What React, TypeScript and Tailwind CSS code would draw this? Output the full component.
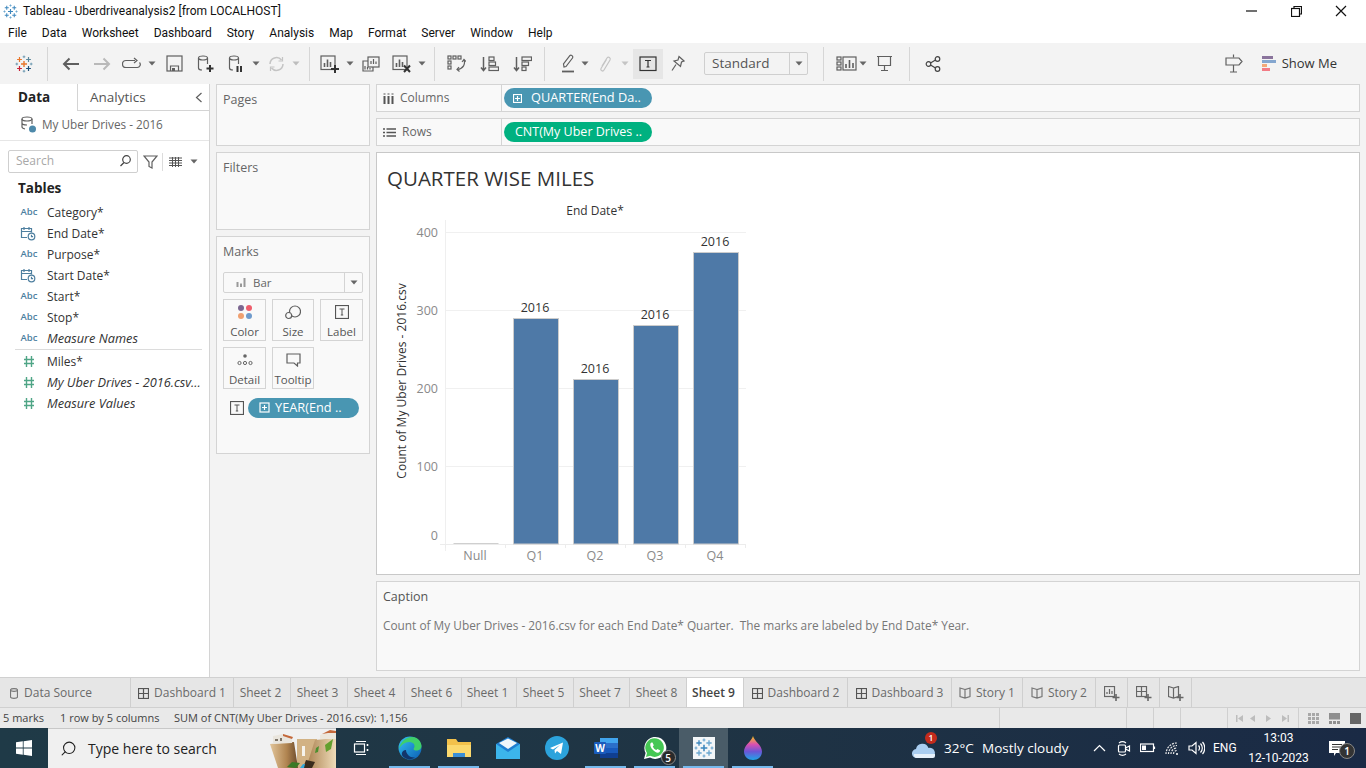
import { Search } from "lucide-react";

const stroke = "#5f5f5f";

function Ic({ w = 20, h = 20, c = stroke, children }: { w?: number; h?: number; c?: string; children: React.ReactNode }) {
  return (
    <svg width={w} height={h} viewBox={`0 0 ${w} ${h}`} fill="none" stroke={c} strokeWidth="1.2">
      {children}
    </svg>
  );
}

function Cross({ x, y, r, c, sw = 1 }: { x: number; y: number; r: number; c: string; sw?: number }) {
  return <path d={`M${x - r} ${y}H${x + r}M${x} ${y - r}V${y + r}`} stroke={c} strokeWidth={sw} fill="none" />;
}

// tableau logo, a = centre and top left, then clockwise
function TableauMark({ size = 18, a, b, d, e, s }: { size?: number; a: string; b: string; d: string; e: string; s: string }) {
  return (
    <svg width={size} height={size} viewBox="0 0 18 18">
      <Cross x={9} y={9} r={3} c={a} sw={1.4} />
      <Cross x={9} y={1.8} r={1.3} c={s} />
      <Cross x={9} y={16.2} r={1.3} c={s} />
      <Cross x={1.8} y={9} r={1.3} c={s} />
      <Cross x={16.2} y={9} r={1.3} c={s} />
      <Cross x={4.5} y={4.5} r={2.4} c={a} sw={1.2} />
      <Cross x={13.5} y={4.5} r={2.4} c={b} sw={1.2} />
      <Cross x={4.5} y={13.5} r={2.4} c={d} sw={1.2} />
      <Cross x={13.5} y={13.5} r={2.4} c={e} sw={1.2} />
    </svg>
  );
}

function Caret({ c = "#666" }: { c?: string }) {
  return (
    <svg width="8" height="5" viewBox="0 0 8 5">
      <path d="M0.5 0.5H7.5L4 4.5Z" fill={c} />
    </svg>
  );
}

function Slot({ w, children }: { w: string; children?: React.ReactNode }) {
  return <div className={`flex h-full shrink-0 items-center justify-center ${w}`}>{children}</div>;
}

function Sep() {
  return <div className="h-[34px] w-px shrink-0 bg-[#d6d6d6]" />;
}

function Toolbar() {
  return (
    <div className="flex h-[41px] items-center bg-[#f3f3f3]">
      <Slot w="w-[47px]">
        <TableauMark a="#e8762b" b="#5b879b" d="#c72037" e="#1f4f78" s="#6f9bb3" />
      </Slot>
      <Sep />
      <Slot w="w-[6px]" />
      <Slot w="w-[32px]">
        <Ic w={17} h={14} c="#5f5f5f">
          <path d="M17 7H2M7.5 1.5L2 7l5.5 5.5" strokeWidth="2" />
        </Ic>
      </Slot>
      <Slot w="w-[32px]">
        <Ic w={17} h={14} c="#b9b9b9">
          <path d="M0 7h15M9.500 1.500L15 7l-5.500 5.500" strokeWidth="2" />
        </Ic>
      </Slot>
      <Slot w="w-[26px]">
        <Ic w={19} h={14}>
          <path d="M13 3.500H4a3 3 0 0 0 0 7h11a3 3 0 0 0 2.500-5" />
          <path d="M12 1l3 2.500L12 6" />
        </Ic>
      </Slot>
      <Slot w="w-[16px]"><Caret /></Slot>
      <Slot w="w-[28px]">
        <Ic w={17} h={17}>
          <rect x="1" y="1" width="15" height="15" />
          <path d="M4.500 16v-5h8v5" />
          <rect x="6" y="13" width="3" height="3" fill={stroke} stroke="none" />
        </Ic>
      </Slot>
      <Slot w="w-[36px]">
        <Ic w={18} h={18}>
          <ellipse cx="6" cy="3" rx="4.500" ry="2" />
          <path d="M1.500 3v10c0 1 1 2 3.500 2M10.500 3v6" />
          <path d="M13 10v7M9.500 13.500h7" stroke="#333" strokeWidth="2" />
        </Ic>
      </Slot>
      <Slot w="w-[24px]">
        <Ic w={16} h={18}>
          <ellipse cx="6" cy="3" rx="4.500" ry="2" />
          <path d="M1.500 3v10c0 1 1 2 3.500 2M10.500 3v6" />
          <path d="M9.500 11v6M13 11v6" stroke="#333" strokeWidth="2" />
        </Ic>
      </Slot>
      <Slot w="w-[16px]"><Caret /></Slot>
      <Slot w="w-[24px]">
        <Ic w={17} h={16} c="#c4c4c4">
          <path d="M2 8a6.500 6.500 0 0 1 11.500-4M15 8a6.500 6.500 0 0 1-11.500 4" strokeWidth="1.500" />
          <path d="M14.500 1v4h-4M2.500 15v-4h4" />
        </Ic>
      </Slot>
      <Slot w="w-[16px]"><Caret c="#bdbdbd" /></Slot>
      <Slot w="w-[5px]" />
      <Sep />
      <Slot w="w-[5px]" />
      <Slot w="w-[30px]">
        <Ic w={20} h={18}>
          <rect x="1" y="1" width="14" height="13.500" />
          <path d="M4.500 12V8M7.500 12V4.500M10.500 12V7" strokeWidth="1.600" />
          <path d="M15 10v8M11 14h8" stroke="#333" strokeWidth="2" />
        </Ic>
      </Slot>
      <Slot w="w-[10px]"><Caret /></Slot>
      <Slot w="w-[31px]">
        <Ic w={18} h={16}>
          <rect x="6" y="1" width="11" height="10" />
          <path d="M9 8V5M11.500 8V3M14 8V5.500" />
          <path d="M6 5H1v10h10v-4" />
          <path d="M3 13.500V10M5.500 13.500V11M8 13.500V12" />
        </Ic>
      </Slot>
      <Slot w="w-[31px]">
        <Ic w={20} h={18}>
          <rect x="1" y="1" width="14" height="13.500" />
          <path d="M4.500 12V8M7.500 12V4.500M10.500 12V7" strokeWidth="1.600" />
          <path d="M12 10.500l6 6.500M18 10.500l-6 6.500" stroke="#333" strokeWidth="2" />
        </Ic>
      </Slot>
      <Slot w="w-[10px]"><Caret /></Slot>
      <Slot w="w-[7px]" />
      <Sep />
      <Slot w="w-[5px]" />
      <Slot w="w-[33px]">
        <Ic w={19} h={17}>
          <rect x="1" y="1" width="3" height="3" />
          <rect x="6" y="1" width="3" height="3" />
          <rect x="11" y="1" width="3" height="3" />
          <rect x="1" y="6" width="3" height="3" />
          <rect x="1" y="11" width="3" height="3" />
          <path d="M17 5c1.500 4-.5 8.500-6.500 9.500M12 12l-2 2.500 2.500 2M15 7l2-2.500 2 2" />
        </Ic>
      </Slot>
      <Slot w="w-[33px]">
        <Ic w={19} h={16}>
          <path d="M3.500 1v13M1 11.500L3.500 14.500 6 11.500" strokeWidth="1.500" />
          <rect x="9" y="1" width="5" height="3.500" />
          <rect x="9" y="6" width="6.500" height="3.500" />
          <rect x="9" y="11" width="9.500" height="3.500" />
        </Ic>
      </Slot>
      <Slot w="w-[32px]">
        <Ic w={19} h={16}>
          <path d="M3.500 1v13M1 11.500L3.500 14.500 6 11.500" strokeWidth="1.500" />
          <rect x="9" y="1" width="9.500" height="3.500" />
          <rect x="9" y="6" width="6.500" height="3.500" />
          <rect x="9" y="11" width="4" height="3.500" />
        </Ic>
      </Slot>
      <Slot w="w-[6px]" />
      <Sep />
      <Slot w="w-[14px]" />
      <Slot w="w-[18px]">
        <Ic w={14} h={20}>
          <path d="M3 13l-.500-3L9 1.500c1-1 3.500 .500 2.500 2.500L5 12.500z" />
          <path d="M1 17.500h12" strokeWidth="1.800" />
        </Ic>
      </Slot>
      <Slot w="w-[16px]"><Caret /></Slot>
      <Slot w="w-[24px]">
        <Ic w={14} h={18} c="#c4c4c4">
          <path d="M4 11l5-8c1.500-2 4 0 3 2l-6 10c-1 2-4 .500-3-1.500l5.500-9" />
        </Ic>
      </Slot>
      <Slot w="w-[16px]"><Caret c="#c4c4c4" /></Slot>
      <Slot w="w-[30px]">
        <div className="flex h-[30px] w-[30px] items-center justify-center bg-[#e6e6e6]">
          <Ic w={18} h={16} c="#333">
            <rect x="1" y="1" width="16" height="13.500" />
            <path d="M6 4.500h6M9 4.500v6.500M7.500 11h3" />
          </Ic>
        </div>
      </Slot>
      <Slot w="w-[29px]">
        <Ic w={14} h={17}>
          <path d="M8 1.500l5 4.500-2.500 1-1 4.500L3 6l4-1z" />
          <path d="M5 9.500L1 15.500" />
        </Ic>
      </Slot>
      <Slot w="w-[12px]" />
      <div className="flex h-[23px] w-[104px] shrink-0 items-center rounded-[2px] border border-[#cfcfcf] text-[13.500px] text-[#555]">
        <span className="flex-1 pl-[7px]">Standard</span>
        <span className="flex h-full w-[18px] items-center justify-center border-l border-[#cfcfcf]"><Caret /></span>
      </div>
      <Slot w="w-[15px]" />
      <Sep />
      <Slot w="w-[12px]" />
      <Slot w="w-[21px]">
        <Ic w={21} h={16}>
          <rect x="1" y="1" width="4" height="3" />
          <rect x="1" y="6" width="4" height="3" />
          <rect x="1" y="11" width="4" height="3" />
          <rect x="7" y="1" width="13" height="13" />
          <path d="M10 12V8M13.500 12V4M17 12V7" strokeWidth="1.600" />
        </Ic>
      </Slot>
      <Slot w="w-[12px]"><Caret /></Slot>
      <Slot w="w-[31px]">
        <Ic w={17} h={17}>
          <path d="M1 1.500h15M2.500 1.500v9h12v-9M8.500 10.500V15M5 15.500h7" />
        </Ic>
      </Slot>
      <Slot w="w-[9px]" />
      <Sep />
      <Slot w="w-[13px]" />
      <Slot w="w-[20px]">
        <Ic w={16} h={16} c="#444">
          <circle cx="3.500" cy="8" r="2.300" />
          <circle cx="12.500" cy="3" r="2.300" />
          <circle cx="12.500" cy="13" r="2.300" />
          <path d="M5.500 7l5-3M5.500 9l5 3" />
        </Ic>
      </Slot>
      <div className="flex-1" />
      <Slot w="w-[18px]">
        <Ic w={18} h={19}>
          <path d="M8.500 0.500v3M8.500 11v7M5 18h7" />
          <path d="M1 4h13l3 3.500-3 3.500H1z" />
        </Ic>
      </Slot>
      <Slot w="w-[19px]" />
      <div className="flex h-[16px] w-[14px] shrink-0 flex-col gap-px">
        <div className="h-[3px] w-[11px] bg-[#8a749c]" />
        <div className="h-[3px] w-[14px] bg-[#84a6cf]" />
        <div className="h-[3px] w-[5px] bg-[#f2a878]" />
        <div className="h-[3px] w-[8px] bg-[#f27b85]" />
      </div>
      <span className="ml-[6px] mr-[29px] text-[13px] text-[#333]">Show Me</span>
    </div>
  );
}

function Abc() {
  return <span className="w-[18px] text-center text-[9.500px] font-semibold text-[#4e7f9f]">Abc</span>;
}

function Cal() {
  return (
    <Ic w={17} h={15} c="#4e7f9f">
      <path d="M7 11.500H1.500V2.500h10v4M1.500 5.500h10M4 1v3M9 1v3" />
      <circle cx="11.500" cy="10.500" r="3.300" />
      <path d="M11.500 8.700v2h1.600" />
    </Ic>
  );
}

function Hash() {
  return (
    <Ic w={18} h={13} c="#4fa586">
      <path d="M6.500 1v11M11.500 1v11M4 4.500h10M4 8.500h10" strokeWidth="1.400" />
    </Ic>
  );
}

function Field({ icon, label, italic }: { icon: React.ReactNode; label: string; italic?: boolean }) {
  return (
    <div className="flex h-[21px] items-center pl-[20px] pr-[3px] text-[#333]">
      <span className="flex w-[27px] shrink-0 items-center">{icon}</span>
      <span className={`truncate ${italic ? "text-[12.750px] italic" : "text-[12px]"}`}>{label}</span>
    </div>
  );
}

function DataPane() {
  return (
    <div className="flex w-[210px] shrink-0 flex-col border-r border-[#d4d4d4] bg-white">
      <div className="flex h-[27px] text-[13.500px]">
        <div className="flex w-[77px] items-center pl-[18px] font-bold text-[#222]">Data</div>
        <div className="flex flex-1 items-center justify-between border-b border-l border-[#d4d4d4] pl-[12px] pr-[6px] text-[#555]">
          Analytics
          <Ic w={8} h={11}><path d="M6.500 1L1.500 5.500 6.500 10" /></Ic>
        </div>
      </div>
      <div className="flex h-[30px] items-center gap-[5px] border-b border-[#e6e6e6] pb-[2px] pl-[20px] text-[11.750px] text-[#666]">
        <Ic w={17} h={17}>
          <ellipse cx="7" cy="3" rx="5" ry="2" />
          <path d="M2 3v8c0 1 1 1.500 3 2M12 3v5M2 7c0 1 2 2 5 2" />
          <circle cx="12.500" cy="13" r="3.500" fill="#4d89aa" stroke="none" />
        </Ic>
        My Uber Drives - 2016
      </div>
      <div className="mt-[9px] flex h-[23px] items-center pl-[8px]">
        <div className="flex h-[23px] w-[130px] items-center justify-between rounded-[2px] border border-[#cfcfcf] pb-[2px] pl-[7px] pr-[5px] text-[12px] text-[#a8a8a8]">
          Search
          <Ic w={13} h={13} c="#444"><circle cx="7.500" cy="5.500" r="3.800" /><path d="M5 8.500L1.500 12" /></Ic>
        </div>
        <span className="ml-[4px] flex w-[16px] justify-center">
          <Ic w={15} h={14}><path d="M1 1h13L9 7v6l-3-1.500V7z" /></Ic>
        </span>
        <span className="ml-[4px] h-[18px] w-px bg-[#dcdcdc]" />
        <span className="ml-[6px]">
          <Ic w={13} h={10} c="#555"><path d="M0 1h13M0 3.500h13M0 6h13M0 8.500h13M3.500 0v10M6.500 0v10M9.500 0v10" strokeWidth="1" /></Ic>
        </span>
        <span className="ml-[8px]"><Caret /></span>
      </div>
      <div className="mt-[4px] flex h-[22px] items-center pl-[18px] text-[13.500px] font-bold text-[#222]">Tables</div>
      <div className="mt-[3px]">
        <Field icon={<Abc />} label="Category*" />
        <Field icon={<Cal />} label="End Date*" />
        <Field icon={<Abc />} label="Purpose*" />
        <Field icon={<Cal />} label="Start Date*" />
        <Field icon={<Abc />} label="Start*" />
        <Field icon={<Abc />} label="Stop*" />
        <Field icon={<Abc />} label="Measure Names" italic />
      </div>
      <div className="ml-[15px] mr-[7px] h-px bg-[#dcdcdc]" />
      <div className="mt-px">
        <Field icon={<Hash />} label="Miles*" />
        <Field icon={<Hash />} label="My Uber Drives - 2016.csv..." italic />
        <Field icon={<Hash />} label="Measure Values" italic />
      </div>
    </div>
  );
}

function MarkCard({ icon, label }: { icon: React.ReactNode; label: string }) {
  return (
    <div className="flex h-[42px] w-full flex-col items-center justify-end border border-[#d4d4d4] text-[11.500px] text-[#555]">
      <div className="flex flex-1 items-center justify-center pt-[2px]">{icon}</div>
      {label}
    </div>
  );
}

function TBox({ c = "#555" }: { c?: string }) {
  return (
    <Ic w={14} h={14} c={c}>
      <rect x="0.500" y="0.500" width="13" height="13" />
      <path d="M4.500 4h5M7 4v6M5.800 10h2.400" strokeWidth="1" />
    </Ic>
  );
}

function ShelfCards() {
  return (
    <div className="flex w-[154px] shrink-0 flex-col gap-[6px]">
      <div className="h-[62px] border border-[#d4d4d4] bg-[#f9f9f9] pl-[6px] pt-[6px] text-[12.500px] text-[#666]">Pages</div>
      <div className="h-[78px] border border-[#d4d4d4] bg-[#f9f9f9] pl-[6px] pt-[6px] text-[12.500px] text-[#666]">Filters</div>
      <div className="h-[218px] border border-[#d4d4d4] bg-[#f9f9f9] pl-[6px] pr-[6px] pt-[6px]">
        <div className="text-[12.500px] text-[#666]">Marks</div>
        <div className="mt-[10px] flex h-[21px] items-center rounded-[2px] border border-[#d4d4d4] text-[11.500px] text-[#666]">
          <span className="ml-[12px]">
            <Ic w={10} h={10} c="#999"><path d="M1.500 10V5M5 10V6.500M8.500 10V1" strokeWidth="2" /></Ic>
          </span>
          <span className="ml-[7px] flex-1">Bar</span>
          <span className="flex h-full w-[18px] items-center justify-center border-l border-[#d4d4d4]"><Caret /></span>
        </div>
        <div className="mt-[6px] grid grid-cols-[43px_42px_43px] gap-x-[6px] gap-y-[6px]">
          <MarkCard
            label="Color"
            icon={
              <svg width="16" height="16" viewBox="0 0 16 16">
                <circle cx="4" cy="4" r="3" fill="#7b6690" />
                <circle cx="12" cy="4" r="3" fill="#ee5d6c" />
                <circle cx="4" cy="12" r="3" fill="#f0a070" />
                <circle cx="12" cy="12" r="3" fill="#6f9bcc" />
              </svg>
            }
          />
          <MarkCard
            label="Size"
            icon={
              <Ic w={16} h={15}>
                <circle cx="10" cy="6.500" r="5.500" />
                <circle cx="3.700" cy="10.500" r="3" fill="#f9f9f9" />
              </Ic>
            }
          />
          <MarkCard label="Label" icon={<TBox />} />
          <MarkCard
            label="Detail"
            icon={
              <svg width="16" height="14" viewBox="0 0 16 14" fill="none" stroke="#666">
                <circle cx="8" cy="3" r="1.800" fill="#666" stroke="none" />
                <circle cx="2.500" cy="10" r="1.600" />
                <circle cx="8" cy="10" r="1.600" />
                <circle cx="13.500" cy="10" r="1.600" />
              </svg>
            }
          />
          <MarkCard
            label="Tooltip"
            icon={
              <Ic w={15} h={14}><path d="M1 1h13v9h-2.500v3L8 10H1z" /></Ic>
            }
          />
        </div>
        <div className="mt-[9px] flex items-center pl-[7px]">
          <TBox />
          <div className="ml-[4px] flex h-[20px] w-[111px] items-center rounded-full bg-[#4996b2] pl-[11px] text-[12.750px] text-white">
            <Ic w={11} h={11} c="white"><rect x="1" y="1" width="9" height="9" /><path d="M3 5.500h5M5.500 3v5" /></Ic>
            <span className="ml-[5px]">YEAR(End ..</span>
          </div>
        </div>
      </div>
    </div>
  );
}

function Shelf({ icon, label, children }: { icon: React.ReactNode; label: string; children: React.ReactNode }) {
  return (
    <div className="flex h-[28px] items-center border border-[#d4d4d4] bg-[#f9f9f9] text-[12px] text-[#666]">
      <div className="flex h-full w-[125px] shrink-0 items-center gap-[6px] border-r border-[#d4d4d4] pl-[6px]">
        {icon}
        {label}
      </div>
      <div className="pl-[2px]">{children}</div>
    </div>
  );
}

function Pill({ color, children }: { color: string; children: React.ReactNode }) {
  return <div className={`flex h-[20px] w-[148px] items-center rounded-full text-[12.500px] text-white ${color}`}>{children}</div>;
}

const bars = [
  { x: 513.5, y: 318.5 },
  { x: 573.5, y: 379.5 },
  { x: 633.5, y: 325.5 },
  { x: 693.5, y: 252.5 },
];

function Chart() {
  return (
    <svg width="400" height="370" viewBox="377 200 400 370" className="block" fontFamily="'Open Sans', sans-serif">
      <text x="595" y="215" textAnchor="middle" fontSize="12" fill="#333">End Date*</text>
      {[232.5, 310.5, 388.5, 466.5].map((y) => (
        <line key={y} x1="446" x2="746" y1={y} y2={y} stroke="#f0f0f0" />
      ))}
      <line x1="445.500" x2="445.500" y1="220" y2="551" stroke="#efefef" />
      <line x1="440" x2="746" y1="544.500" y2="544.500" stroke="#ececec" />
      {[445.5, 505.5, 565.5, 625.5, 685.5, 745.5].map((x) => (
        <line key={x} x1={x} x2={x} y1="544" y2="548" stroke="#ececec" />
      ))}
      <rect x="453.500" y="543" width="45" height="1" fill="#cfcfcf" />
      {bars.map((b) => (
        <rect key={b.x} x={b.x} y={b.y} width="45" height={544 - b.y} fill="#4e79a7" stroke="#cccccc" />
      ))}
      {[
        ["400", 237],
        ["300", 315],
        ["200", 393],
        ["100", 471],
        ["0", 540],
      ].map(([t, y]) => (
        <text key={t} x="438" y={y} textAnchor="end" fontSize="12.500" fill="#8a8a8a">{t}</text>
      ))}
      <text transform="translate(406 381) rotate(-90)" textAnchor="middle" fontSize="12" fill="#333">Count of My Uber Drives - 2016.csv</text>
      {[
        ["Null", 475],
        ["Q1", 535],
        ["Q2", 595],
        ["Q3", 655],
        ["Q4", 715],
      ].map(([t, x]) => (
        <text key={t} x={x} y="560" textAnchor="middle" fontSize="12.500" fill="#8a8a8a">{t}</text>
      ))}
      {[
        [535, 312],
        [595, 373],
        [655, 319],
        [715, 246],
      ].map(([x, y]) => (
        <text key={x} x={x} y={y} textAnchor="middle" fontSize="12.500" fill="#333">2016</text>
      ))}
    </svg>
  );
}

function Tab({ w, label, icon, active }: { w: string; label: string; icon?: React.ReactNode; active?: boolean }) {
  return (
    <div
      className={`flex h-full shrink-0 items-center justify-center gap-[5px] border-r border-[#cfcfcf] text-[12px] ${w} ${icon ? "" : "pr-[3px]"} ${
        active ? "bg-white font-semibold text-[#444]" : "pt-[1px] text-[#6a6a6a]"
      }`}
    >
      {icon}
      {label}
    </div>
  );
}

function DashIcon() {
  return <Ic w={11} h={11} c="#555"><rect x="0.500" y="0.500" width="10" height="10" /><path d="M5.500 0.500v10M0.500 5.500h10" /></Ic>;
}

function StoryIcon() {
  return <Ic w={12} h={12} c="#777"><path d="M6 2.500L1 1v8.500l5 1.500 5-1.500V1zM6 2.500V11" /></Ic>;
}

function TabBar() {
  return (
    <div className="flex h-[31px] border-y border-[#d0d0d0] bg-[#e6e6e6]">
      <div className="flex h-full w-[131px] shrink-0 items-center gap-[6px] border-r border-[#cfcfcf] pl-[10px] pt-[1px] text-[12px] text-[#6a6a6a]">
        <Ic w={8} h={11} c="#777"><path d="M0.500 2v7c0 1.800 7 1.800 7 0V2c0-1.800-7-1.800-7 0zM0.500 2c0 1.800 7 1.800 7 0" /></Ic>
        Data Source
      </div>
      <Tab w="w-[103px]" label="Dashboard 1" icon={<DashIcon />} />
      <Tab w="w-[57px]" label="Sheet 2" />
      <Tab w="w-[57px]" label="Sheet 3" />
      <Tab w="w-[57px]" label="Sheet 4" />
      <Tab w="w-[57px]" label="Sheet 6" />
      <Tab w="w-[55px]" label="Sheet 1" />
      <Tab w="w-[57px]" label="Sheet 5" />
      <Tab w="w-[56px]" label="Sheet 7" />
      <Tab w="w-[57px]" label="Sheet 8" />
      <Tab w="w-[57px]" label="Sheet 9" active />
      <Tab w="w-[104px]" label="Dashboard 2" icon={<DashIcon />} />
      <Tab w="w-[104px]" label="Dashboard 3" icon={<DashIcon />} />
      <Tab w="w-[71px]" label="Story 1" icon={<StoryIcon />} />
      <Tab w="w-[73px]" label="Story 2" icon={<StoryIcon />} />
      <Tab
        w="w-[32px]"
        label=""
        icon={
          <Ic w={16} h={15} c="#666">
            <rect x="0.500" y="0.500" width="10" height="10" />
            <path d="M3 8V6M5.500 8V3M8 8V5" />
            <path d="M12 8v7M8.500 11.500h7" strokeWidth="1.600" />
          </Ic>
        }
      />
      <Tab
        w="w-[32px]"
        label=""
        icon={
          <Ic w={16} h={15} c="#666">
            <rect x="0.500" y="0.500" width="10" height="10" />
            <path d="M5.500 0.500v10M0.500 5.500h10" />
            <path d="M12 8v7M8.500 11.500h7" strokeWidth="1.600" />
          </Ic>
        }
      />
      <Tab
        w="w-[32px]"
        label=""
        icon={
          <Ic w={16} h={15} c="#666">
            <path d="M5.500 2L0.500 0.500v10l5 1.500 5-1.500V0.500zM5.500 2v10" />
            <path d="M12 8v7M8.500 11.500h7" strokeWidth="1.600" />
          </Ic>
        }
      />
    </div>
  );
}

function StatusBar() {
  return (
    <div className="flex h-[20px] items-center bg-[#e9e9e9] text-[11px] text-[#444]">
      <span className="ml-[3px] w-[57px]">5 marks</span>
      <span className="w-[114px]">1 row by 5 columns</span>
      <span className="w-[825px]">SUM of CNT(My Uber Drives - 2016.csv): 1,156</span>
      <span className="h-full w-[127px] border-l border-[#d0d0d0]" />
      <span className="h-full w-[27px] border-l border-[#d0d0d0]" />
      <span className="h-full w-[27px] border-l border-[#d0d0d0]" />
      <span className="h-full w-[47px] border-l border-[#d0d0d0]" />
      <span className="flex h-full w-[71px] items-center gap-[9px] border-l border-[#d0d0d0] pl-[8px]">
        <svg width="56" height="9" viewBox="0 0 56 9" fill="#bdbdbd">
          <path d="M0 1h1.500v7H0zM7 1v7L2 4.500zM19 1v7l-5-3.500zM30 1l5 3.500L30 8zM46 1l5 3.500L46 8zM51.500 1H53v7h-1.500z" />
        </svg>
      </span>
      <span className="flex h-full flex-1 items-center gap-[10px] border-l border-[#d0d0d0] pl-[9px]">
        <svg width="11" height="11" viewBox="0 0 11 11" fill="#a8a8a8">
          <path d="M0 0h3v3H0zM4 0h3v3H4zM8 0h3v3H8zM0 4h3v3H0zM4 4h3v3H4zM8 4h3v3H8zM0 8h3v3H0zM4 8h3v3H4zM8 8h3v3H8z" />
        </svg>
        <svg width="11" height="11" viewBox="0 0 11 11" fill="#8f8f8f">
          <path d="M0 0h11v6.500H0zM0 8h3v3H0zM4 8h3v3H4zM8 8h3v3H8z" />
        </svg>
        <span className="h-[11px] w-[11px] bg-[#666]" />
      </span>
    </div>
  );
}

function TaskSlot({ w = "w-[49px]", line, bg, children }: { w?: string; line?: boolean; bg?: string; children: React.ReactNode }) {
  return (
    <div className={`relative flex h-full shrink-0 items-center justify-center ${w} ${bg ?? ""}`}>
      {children}
      {line && <div className="absolute bottom-0 left-[4px] right-[4px] h-[2px] bg-[#76b9ed]" />}
    </div>
  );
}

function Taskbar() {
  return (
    <div className="flex h-[40px] bg-gradient-to-r from-[#1f3a47] via-[#1f3444] to-[#1a2a45] text-white">
      <div className="flex w-[48px] shrink-0 items-center justify-center">
        <svg width="16" height="16" viewBox="0 0 16 16" fill="white">
          <path d="M0 2.300L6.800 1.300V7.600H0zM7.600 1.200L16 0V7.600H7.600zM0 8.400H6.800V14.700L0 13.700zM7.600 8.400H16V16L7.600 14.800z" />
        </svg>
      </div>
      <div className="relative flex w-[288px] shrink-0 items-center overflow-hidden border-t border-[#c8c8c8] bg-[#f0f0f0] pl-[12px] text-[14px] text-[#222]">
        <Search size={17} strokeWidth={1.500} className="-scale-x-100" color="#222" />
        <span className="ml-[11px]">Type here to search</span>
        <svg className="absolute bottom-0 right-0" width="66" height="38" viewBox="0 0 66 38">
          <defs>
            <linearGradient id="rockL" x1="0" y1="0" x2="1" y2="0">
              <stop offset="0" stopColor="#e2c59a" />
              <stop offset="0.600" stopColor="#b08450" />
              <stop offset="1" stopColor="#6b4a2c" />
            </linearGradient>
            <linearGradient id="rockR" x1="0" y1="0" x2="1" y2="0">
              <stop offset="0" stopColor="#a97f4e" />
              <stop offset="1" stopColor="#efdcb9" />
            </linearGradient>
          </defs>
          <path d="M27 9H47V38H27Z" fill="#d2b284" />
          <path d="M0 14L24 12L28 38H8Z" fill="url(#rockL)" />
          <path d="M45 10L66 8V38H36Z" fill="url(#rockR)" />
          <path d="M3 6L13 4L22 7V13L3 14Z" fill="#e9e5dd" />
          <path d="M5 9h3v2H5zM10 8h2v3h-2z" fill="#7d7468" />
          <path d="M13 4L23 7L22 9L13 6Z" fill="#c4683a" />
          <path d="M50 5L60 1L66 2V9L50 9Z" fill="#ece7dc" />
          <path d="M52 4L60 0L66 1V3L58 3Z" fill="#c4683a" />
          <path d="M55 15L63 9L61 19L56 22Z" fill="#63a02f" />
          <path d="M45 23L46 18L49 16L48 22Z" fill="#4c8f2e" />
          <path d="M17 37L22 32L30 33L26 38Z" fill="#3a7a26" />
          <path d="M33 38L36 30L45 32L42 38Z" fill="#3a2c1c" />
          <path d="M30 38L33 34L35 34L34 38Z" fill="#35a8d8" />
          <path d="M32 16H35V26H32Z" fill="#f6f3ec" />
        </svg>
      </div>
      <TaskSlot w="w-[49px]">
        <Ic w={16} h={16} c="white">
          <path d="M3 1.500h10M3 14.500h10" />
          <rect x="1.500" y="4" width="10" height="8" />
          <path d="M14.500 4v2M14.500 9v2" strokeWidth="1.600" />
        </Ic>
      </TaskSlot>
      <TaskSlot line>
        <svg width="24" height="24" viewBox="0 0 24 24">
          <defs>
            <linearGradient id="edgeA" x1="0" y1="0" x2="1" y2="1">
              <stop offset="0" stopColor="#35c1f1" />
              <stop offset="1" stopColor="#0b5fb4" />
            </linearGradient>
          </defs>
          <circle cx="12" cy="12" r="11.500" fill="url(#edgeA)" />
          <path d="M1 13C2 6 8 1 14 1c6 0 9.500 5 9.500 9 0 3-2.500 4.500-5 4.500-2 0-3-.7-3-1.500 0-1 1-1 1-3C16.500 7 13.500 6 11 6 7 6 3 9 1 13Z" fill="#3fd06a" />
          <path d="M8 14c0 4 4 8 9 7.500-3 2-8 2.500-11.500-.5C3 19 3 14.500 8 14Z" fill="#12356b" />
        </svg>
      </TaskSlot>
      <TaskSlot line>
        <svg width="24" height="20" viewBox="0 0 24 20">
          <path d="M0 1h9l2 3h13v15H0z" fill="#f2c14b" />
          <path d="M0 7h24v12H0z" fill="#fbd96e" />
          <path d="M6 15h12v4H6z" fill="#3a8fd6" />
        </svg>
      </TaskSlot>
      <TaskSlot>
        <svg width="24" height="22" viewBox="0 0 24 22">
          <path d="M0 7L12 0L24 7V22H0Z" fill="#1f7fd1" />
          <path d="M0 7L12 15L24 7V22H0Z" fill="#3cb5ec" />
          <path d="M3 6L12 1.500L21 6L12 12Z" fill="#f1f7fb" />
        </svg>
      </TaskSlot>
      <TaskSlot>
        <svg width="24" height="24" viewBox="0 0 24 24">
          <circle cx="12" cy="12" r="12" fill="#2ca3dc" />
          <path d="M5 12L18 6.500L16 18L12 15L10 17.500L9.500 14L15 9L8 13.500Z" fill="white" />
        </svg>
      </TaskSlot>
      <TaskSlot line>
        <svg width="24" height="22" viewBox="0 0 24 22">
          <rect x="6" y="1" width="18" height="20" rx="1" fill="#2b6fc9" />
          <rect x="6" y="1" width="18" height="5" fill="#41a5ee" />
          <rect x="6" y="11" width="18" height="5" fill="#185abd" />
          <rect x="6" y="16" width="18" height="5" fill="#103f91" />
          <rect x="0" y="5" width="12" height="12" rx="1" fill="#1a5cbd" />
          <text x="6" y="14.500" textAnchor="middle" fontSize="10" fontWeight="700" fill="white">W</text>
        </svg>
      </TaskSlot>
      <TaskSlot line>
        <div className="relative">
          <svg width="24" height="24" viewBox="0 0 24 24">
            <path d="M1 23l1.600-6A11 11 0 1 1 7 21.500Z" fill="white" />
            <path d="M3 21l1-4A9.300 9.300 0 1 1 7.200 19.800Z" fill="#45c754" />
            <path d="M8.500 6.500c-2 1-1.500 4 1 7s5.500 4 7 2.500l.8-1.500-2.800-1.500-1.200 1c-1.500-.5-3-2-3.500-3.500l1-1.200L9.500 6.500Z" fill="white" />
          </svg>
          <div className="absolute -bottom-[5px] -right-[9px] flex h-[15px] w-[15px] items-center justify-center rounded-full border border-[#888] bg-[#2a2a2a] text-[10px] font-semibold leading-none">5</div>
        </div>
      </TaskSlot>
      <TaskSlot line bg="bg-[#4a5c68]">
        <div className="flex h-[22px] w-[22px] items-center justify-center bg-[#f3f6f8]">
          <TableauMark size={20} a="#3d87bd" b="#6aa6cf" d="#6aa6cf" e="#6aa6cf" s="#6aa6cf" />
        </div>
      </TaskSlot>
      <TaskSlot line>
        <svg width="20" height="24" viewBox="0 0 20 24">
          <defs>
            <linearGradient id="dropA" x1="0" y1="0" x2="0" y2="1">
              <stop offset="0" stopColor="#f5c518" />
              <stop offset="0.350" stopColor="#d94fb0" />
              <stop offset="0.650" stopColor="#6b56d6" />
              <stop offset="1" stopColor="#1fa5e8" />
            </linearGradient>
          </defs>
          <path d="M10 0C11 5 19 9 19 15.500C19 20.500 15 24 10 24C5 24 1 20.500 1 15.500C1 9 9 5 10 0Z" fill="url(#dropA)" />
        </svg>
      </TaskSlot>
      <div className="flex-1" />
      <div className="flex shrink-0 items-center">
        <div className="relative mr-[8px] h-[22px] w-[24px]">
          <svg width="24" height="18" viewBox="0 0 24 18" className="absolute bottom-0">
            <path d="M5 17a4.500 4.500 0 0 1-1-9 6.500 6.500 0 0 1 12.500-1A5 5 0 0 1 19 17Z" fill="#a9cdf0" />
            <path d="M2 13h21v2a2 2 0 0 1-2 2H5a3 3 0 0 1-3-4Z" fill="#e6f1fb" />
          </svg>
          <div className="absolute -top-[5px] right-[-1px] flex h-[12px] w-[12px] items-center justify-center rounded-full bg-[#c42b1c] text-[8.500px] font-semibold leading-none">1</div>
        </div>
        <span className="w-[38px] text-[13.500px]">32°C</span>
        <span className="w-[105px] text-[13.500px]">Mostly cloudy</span>
        <span className="flex w-[25px] justify-center">
          <Ic w={13} h={8} c="white"><path d="M1 7l5.500-5.500L12 7" /></Ic>
        </span>
        <span className="flex w-[24px] justify-center">
          <Ic w={14} h={15} c="white"><rect x="1.500" y="4" width="7" height="7" rx="1" /><path d="M8.500 7l4-2v5l-4-2M2 2c2-1.500 5-1.500 7 0M2 13c2 1.500 5 1.500 7 0" /></Ic>
        </span>
        <span className="flex w-[24px] justify-center">
          <Ic w={16} h={10} c="white"><rect x="0.500" y="1" width="13" height="7.500" /><rect x="2" y="2.500" width="4" height="4.500" fill="white" stroke="none" /><path d="M14.500 3.500V6" /></Ic>
        </span>
        <span className="flex w-[25px] justify-center">
          <Ic w={15} h={13} c="#e8e8e8"><path d="M1 12A11 11 0 0 1 12 1M3.500 12A8.500 8.500 0 0 1 12 3.500M6 12a6 6 0 0 1 6-6M8.500 12A3.500 3.500 0 0 1 12 8.500" strokeDasharray="2 1" /><circle cx="12" cy="12" r="1" fill="white" stroke="none" /></Ic>
        </span>
        <span className="flex w-[22px] justify-center">
          <Ic w={17} h={14} c="white"><path d="M1 5h3l4-3.500v11L4 9H1zM10.500 4.500a3.500 3.500 0 0 1 0 5M12.500 2.500a6.500 6.500 0 0 1 0 9M14.500 1a9 9 0 0 1 0 12" /></Ic>
        </span>
        <span className="ml-[6px] w-[37px] font-['Roboto',sans-serif] text-[12px]">ENG</span>
        <div className="flex w-[57px] flex-col items-center whitespace-nowrap font-['Roboto',sans-serif] text-[12px] leading-[20px]">
          <span>13:03</span>
          <span>12-10-2023</span>
        </div>
        <div className="relative flex w-[59px] justify-center">
          <Ic w={16} h={15} c="white">
            <path d="M0 0h16v12H7l-2 3v-3H0z" fill="white" stroke="none" />
            <path d="M3 3.500h10M3 6h10M3 8.500h6" stroke="#333" />
          </Ic>
          <div className="absolute left-[32px] top-[2px] flex h-[16px] w-[16px] items-center justify-center rounded-full border border-[#888] bg-[#333] text-[10px] font-semibold leading-none">1</div>
        </div>
      </div>
    </div>
  );
}

export default function App() {
  return (
    <div className="flex h-[768px] w-[1366px] flex-col overflow-hidden bg-[#f3f3f3] font-['Open_Sans',sans-serif]">
      <div className="flex h-[22px] shrink-0 items-center bg-white pl-[3px] pr-[2px] font-['Roboto',sans-serif] text-[12px] text-[#111]">
        <TableauMark size={15} a="#3d87bd" b="#3d87bd" d="#3d87bd" e="#3d87bd" s="#6aa6cf" />
        <span className="ml-[5px]">Tableau - Uberdriveanalysis2 [from LOCALHOST]</span>
        <div className="flex-1" />
        <Slot w="w-[46px]"><Ic w={11} h={2} c="#111"><path d="M0 1h11" /></Ic></Slot>
        <Slot w="w-[44px]"><Ic w={11} h={11} c="#111"><rect x="0.500" y="2.500" width="8" height="8" /><path d="M3 2.500V0.500h7.500V8H8.500" /></Ic></Slot>
        <Slot w="w-[46px]"><Ic w={12} h={12} c="#111"><path d="M1 1l10 10M11 1L1 11" /></Ic></Slot>
      </div>
      <div className="flex h-[21px] shrink-0 items-center gap-[15px] bg-white pl-[8px] font-['Roboto',sans-serif] text-[12px] text-[#111]">
        {["File", "Data", "Worksheet", "Dashboard", "Story", "Analysis", "Map", "Format", "Server", "Window", "Help"].map((m) => (
          <span key={m}>{m}</span>
        ))}
      </div>
      <Toolbar />
      <div className="flex min-h-0 flex-1">
        <DataPane />
        <div className="mx-[6px] flex flex-col">
          <ShelfCards />
        </div>
        <div className="flex w-[984px] shrink-0 flex-col gap-[6px]">
          <Shelf
            label="Columns"
            icon={<Ic w={11} h={11} c="#555"><path d="M1.500 3v8M5.500 3v8M9.500 3v8M1.500 0.500v1M5.500 0.500v1M9.500 0.500v1" strokeWidth="2" /></Ic>}
          >
            <Pill color="bg-[#4996b2] text-[12.750px]">
              <span className="ml-[9px] mr-[9px] flex">
                <Ic w={9} h={9} c="white"><rect x="0.500" y="0.500" width="8" height="8" /><path d="M2 4.500h5M4.500 2v5" /></Ic>
              </span>
              QUARTER(End Da..
            </Pill>
          </Shelf>
          <Shelf
            label="Rows"
            icon={<Ic w={13} h={9} c="#555"><path d="M0 1h2M3.500 1H13M0 4.500h2M3.500 4.500H13M0 8h2M3.500 8H13" strokeWidth="1.400" /></Ic>}
          >
            <Pill color="bg-[#00b180]"><span className="ml-[11px]">CNT(My Uber Drives ..</span></Pill>
          </Shelf>
          <div className="h-[423px] border border-[#c8c8c8] bg-white">
            <div className="flex h-[47px] items-center pl-[10px] pt-[3px] text-[20.500px] font-medium text-[#333]">QUARTER WISE MILES</div>
            <Chart />
          </div>
          <div className="h-[90px] border border-[#d4d4d4] bg-[#f9f9f9] pl-[6px] pt-[6px]">
            <div className="text-[12.500px] text-[#555]">Caption</div>
            <div className="mt-[10px] text-[11.850px] text-[#777]">Count of My Uber Drives - 2016.csv for each End Date* Quarter.&nbsp; The marks are labeled by End Date* Year.</div>
          </div>
        </div>
      </div>
      <TabBar />
      <StatusBar />
      <Taskbar />
    </div>
  );
}
